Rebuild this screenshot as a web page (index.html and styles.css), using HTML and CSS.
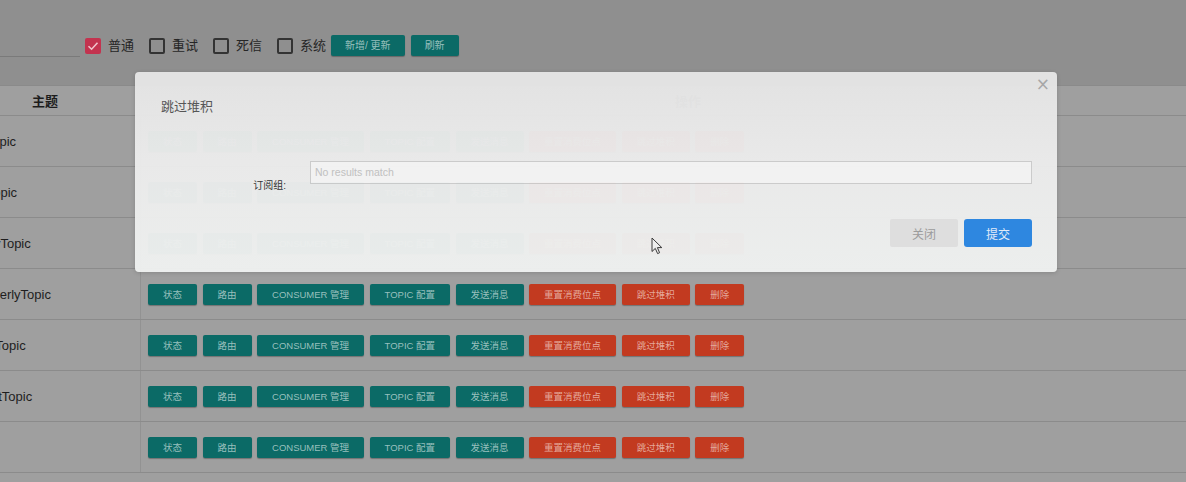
FILE: index.html
```html
<!DOCTYPE html>
<html lang="zh">
<head>
<meta charset="utf-8">
<link rel="stylesheet" href="styles.css">
</head>
<body>
<div class="page">
  <div class="toolbar">
    <div class="search"></div>
    <label class="chk"><span class="box checked"><svg viewBox="0 0 16 16" width="16" height="16"><path d="M3.5 8.2 L6.6 11.2 L12.5 4.8" fill="none" stroke="#f0c4cc" stroke-width="1.6"/></svg></span><span class="chk-text">普通</span></label>
    <label class="chk"><span class="box"></span><span class="chk-text">重试</span></label>
    <label class="chk"><span class="box"></span><span class="chk-text">死信</span></label>
    <label class="chk last"><span class="box"></span><span class="chk-text">系统</span></label>
    <button class="btn teal tb">新增/ 更新</button>
    <button class="btn teal tb">刷新</button>
  </div>
  <div class="table-wrap">
    <div class="table">
      <div class="row head"><div class="c1">主题</div><div class="c2">操作</div></div>
      <div class="row"><div class="c1 name">ATopic</div><div class="c2 ops"><button class="btn teal">状态</button><button class="btn teal">路由</button><button class="btn teal">CONSUMER 管理</button><button class="btn teal">TOPIC 配置</button><button class="btn teal">发送消息</button><button class="btn red">重置消费位点</button><button class="btn red">跳过堆积</button><button class="btn red">删除</button></div></div>
      <div class="row"><div class="c1 name">BTopic</div><div class="c2 ops"><button class="btn teal">状态</button><button class="btn teal">路由</button><button class="btn teal">CONSUMER 管理</button><button class="btn teal">TOPIC 配置</button><button class="btn teal">发送消息</button><button class="btn red">重置消费位点</button><button class="btn red">跳过堆积</button><button class="btn red">删除</button></div></div>
      <div class="row"><div class="c1 name">KeyTopic</div><div class="c2 ops"><button class="btn teal">状态</button><button class="btn teal">路由</button><button class="btn teal">CONSUMER 管理</button><button class="btn teal">TOPIC 配置</button><button class="btn teal">发送消息</button><button class="btn red">重置消费位点</button><button class="btn red">跳过堆积</button><button class="btn red">删除</button></div></div>
      <div class="row"><div class="c1 name">OrderlyTopic</div><div class="c2 ops"><button class="btn teal">状态</button><button class="btn teal">路由</button><button class="btn teal">CONSUMER 管理</button><button class="btn teal">TOPIC 配置</button><button class="btn teal">发送消息</button><button class="btn red">重置消费位点</button><button class="btn red">跳过堆积</button><button class="btn red">删除</button></div></div>
      <div class="row"><div class="c1 name">MyTopic</div><div class="c2 ops"><button class="btn teal">状态</button><button class="btn teal">路由</button><button class="btn teal">CONSUMER 管理</button><button class="btn teal">TOPIC 配置</button><button class="btn teal">发送消息</button><button class="btn red">重置消费位点</button><button class="btn red">跳过堆积</button><button class="btn red">删除</button></div></div>
      <div class="row"><div class="c1 name">TestTopic</div><div class="c2 ops"><button class="btn teal">状态</button><button class="btn teal">路由</button><button class="btn teal">CONSUMER 管理</button><button class="btn teal">TOPIC 配置</button><button class="btn teal">发送消息</button><button class="btn red">重置消费位点</button><button class="btn red">跳过堆积</button><button class="btn red">删除</button></div></div>
      <div class="row"><div class="c1 name"></div><div class="c2 ops"><button class="btn teal">状态</button><button class="btn teal">路由</button><button class="btn teal">CONSUMER 管理</button><button class="btn teal">TOPIC 配置</button><button class="btn teal">发送消息</button><button class="btn red">重置消费位点</button><button class="btn red">跳过堆积</button><button class="btn red">删除</button></div></div>
    </div>
  </div>
</div>

<div class="modal">
  <div class="modal-head">跳过堆积</div>
  <span class="close">×</span>
  <div class="form-row">
    <label class="form-label">订阅组:</label>
    <div class="select">No results match</div>
  </div>
  <div class="modal-foot">
    <button class="mbtn cancel">关闭</button>
    <button class="mbtn submit">提交</button>
  </div>
</div>

<svg class="cursor" width="12" height="18" viewBox="0 0 12 18"><path d="M1 1 L1 14.5 L4.3 11.4 L6.6 16.6 L8.6 15.7 L6.4 10.6 L10.8 10.6 Z" fill="#eeeeee" stroke="#3a3a3a" stroke-width="1" stroke-linejoin="round"/></svg>
</body>
</html>
```
FILE: styles.css
```css
* { box-sizing: border-box; }
html, body {
  margin: 0;
  padding: 0;
}
body {
  width: 1186px;
  height: 482px;
  overflow: hidden;
  background: #9f9f9f;
  font-family: "Liberation Sans", "Noto Sans CJK SC", sans-serif;
  position: relative;
}
.page {
  width: 1186px;
  height: 482px;
  overflow: hidden;
}
.toolbar {
  height: 85px;
  background: #8f8f8f;
  display: flex;
  align-items: center;
  padding-top: 34px;
  padding-bottom: 28px;
}
.search {
  width: 80px;
  height: 23px;
  border-bottom: 1px solid #7a7a7a;
  margin-right: 5px;
}
.chk {
  display: flex;
  align-items: center;
  gap: 7px;
  margin-right: 15px;
  font-size: 13px;
  color: #262626;
}
.chk.last { margin-right: 5px; }
.box {
  width: 16px;
  height: 16px;
  border: 2px solid #333;
  border-radius: 2px;
  display: block;
}
.box.checked {
  border: none;
  background: #c3334f;
}
.box svg { display: block; }
.chk-text { line-height: 16px; }

.btn {
  font-family: "Liberation Sans", "Noto Sans CJK SC", sans-serif;
  font-size: 9.5px;
  height: 21px;
  padding: 0 15px;
  border: none;
  border-radius: 2px;
  color: rgba(190, 215, 212, 0.8);
  box-shadow: 0 1px 1px rgba(0,0,0,0.28);
  white-space: nowrap;
  line-height: 21px;
}
.btn.tb {
  font-size: 10px;
  height: 21px;
  line-height: 21px;
  padding: 0 14px;
  margin-right: 6px;
}
.teal { background: #0b6a66; }
.red { background: #c23a20; color: rgba(235, 190, 178, 0.85); }

.table-wrap {
  overflow: hidden;
  width: 1186px;
  border-top: 1px solid #8a8a8a;
}
.table {
  margin-left: -50px;
  width: 1290px;
}
.row {
  display: flex;
  height: 51px;
  border-bottom: 1px solid #8b8b8b;
}
.row.head {
  height: 30px;
  font-weight: bold;
  font-size: 13px;
  color: #1c1c1c;
}
.c1 {
  width: 191px;
  flex: none;
  border-right: 1px solid #929292;
  display: flex;
  align-items: center;
}
.head .c1 { justify-content: center; font-family: "Noto Sans CJK SC", sans-serif; }
.c2 {
  width: 1094px;
  flex: none;
  display: flex;
  align-items: center;
}
.head .c2 { justify-content: center; font-family: "Noto Sans CJK SC", sans-serif; }
.name {
  padding-left: 28px;
  font-size: 13px;
  color: #1e1e1e;
  white-space: nowrap;
}
.ops {
  padding-left: 7px;
  gap: 5.5px;
}

.modal {
  position: absolute;
  left: 135px;
  top: 72px;
  width: 922px;
  height: 200px;
  border-radius: 4px;
  background: linear-gradient(#e4e4e4, #ebebeb 45%, #eef0ef);
  opacity: 0.975;
  padding: 25px 25px 25px 26px;
  display: flex;
  flex-direction: column;
  box-shadow: 0 1px 4px rgba(0,0,0,0.15);
}
.modal-head {
  height: 18px;
  line-height: 18px;
  font-size: 13px;
  color: #555;
  font-family: "Noto Sans CJK SC", sans-serif;
}
.close {
  position: absolute;
  right: 7px;
  top: 4px;
  font-size: 17px;
  line-height: 17px;
  color: #a8a8a8;
  font-family: "DejaVu Sans", sans-serif;
}
.form-row {
  margin-top: 46px;
  height: 31px;
  display: flex;
  align-items: flex-start;
}
.form-label {
  width: 125px;
  text-align: right;
  font-size: 10px;
  line-height: 12px;
  padding-top: 19px;
  color: #333;
  margin-right: 24px;
}
.select {
  width: 722px;
  height: 23px;
  border: 1px solid #cdcdcd;
  background: #f4f4f4;
  font-size: 10.5px;
  line-height: 21px;
  padding-left: 4px;
  color: #c2c2c2;
}
.modal-foot {
  margin-top: 27px;
  display: flex;
  justify-content: flex-end;
  gap: 6px;
}
.mbtn {
  width: 68px;
  height: 28px;
  border: none;
  border-radius: 3px;
  font-size: 12px;
  font-family: "Noto Sans CJK SC", sans-serif;
}
.cancel { background: #e0e0e0; color: #9c9c9c; border-radius: 2px; }
.submit { background: #2c87e2; color: #e4eefb; }

.cursor {
  position: absolute;
  left: 651px;
  top: 237px;
}
```
